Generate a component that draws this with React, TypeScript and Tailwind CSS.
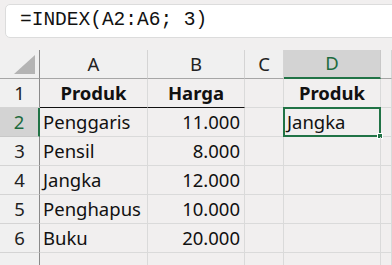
const cols = ['A', 'B', 'C', 'D', '']

const rows: Array<[string, string, string, string]> = [
  ['Produk', 'Harga', '', 'Produk'],
  ['Penggaris', '11.000', '', 'Jangka'],
  ['Pensil', '8.000', '', ''],
  ['Jangka', '12.000', '', ''],
  ['Penghapus', '10.000', '', ''],
  ['Buku', '20.000', '', ''],
  ['', '', '', ''],
]

export default function App() {
  return (
    <div className="w-[392px] h-[265px] overflow-hidden bg-[#f1efef]">
      {/* formula bar */}
      <div className="h-[50px] pt-[4px] pl-[5px]">
        <div className="h-[34px] -mr-4 flex items-center pl-[14px] rounded-[5px] border border-[#dcdcdc] bg-white">
          <span className="font-['Liberation_Mono',monospace] text-[19.5px] text-[#111] leading-none">
            =INDEX(A2:A6; 3)
          </span>
        </div>
      </div>

      <div className="grid grid-cols-[40px_108px_97px_39px_97px_1fr] font-['Noto_Sans',sans-serif] text-[18.5px] leading-none text-[#111]">
        {/* corner */}
        <div className="h-[29px] border-r border-b border-r-[#8a8a8a] border-b-[#a6a6a6] bg-[#f0f0f0] flex items-end justify-end pr-[4px] pb-[4px]">
          <svg width="21" height="19" viewBox="0 0 21 19">
            <polygon points="21,0 21,19 0,19" fill="#b4b4b4" />
          </svg>
        </div>
        {cols.map((c) => (
          <div
            key={c || 'E'}
            className={
              c === 'D'
                ? 'h-[29px] flex items-center justify-center border-r border-r-[#c8c8c8] border-b-2 border-b-[#217346] bg-[#d3d3d3] text-[#1d6b3e]'
                : 'h-[29px] flex items-center justify-center border-r border-r-[#d4d4d4] border-b border-b-[#a6a6a6] bg-[#f0f0f0] text-[#222]'
            }
          >
            {c}
          </div>
        ))}

        {rows.map((r, i) => (
          <Row key={i} n={i + 1} cells={r} active={i === 1} />
        ))}
      </div>
    </div>
  )
}

function Row({ n, cells, active }: { n: number; cells: [string, string, string, string]; active: boolean }) {
  const head = n === 1
  const line = 'border-r border-b border-[#dadada]'
  return (
    <>
      <div
        className={
          active
            ? 'h-[29px] flex items-center justify-center bg-[#d3d3d3] text-[#1d6b3e] border-b border-b-[#c8c8c8] border-r-2 border-r-[#217346]'
            : 'h-[29px] flex items-center justify-center bg-[#f0f0f0] text-[#222] border-b border-b-[#d4d4d4] border-r border-r-[#8a8a8a]'
        }
      >
        {n < 7 ? n : ''}
      </div>
      <div className={`h-[29px] flex items-center ${line} ${head ? 'justify-center font-bold border-b-[#111]' : 'pl-[3px]'}`}>
        {cells[0]}
      </div>
      <div className={`h-[29px] flex items-center ${line} ${head ? 'justify-center font-bold border-b-[#111]' : 'justify-end pr-[4px]'}`}>
        {cells[1]}
      </div>
      <div className={`h-[29px] ${line}`}>{cells[2]}</div>
      <div className={`relative h-[29px] flex items-center ${line} ${head ? 'justify-center font-bold' : 'pl-[3px]'}`}>
        {cells[3]}
        {active && (
          <div className="absolute -left-px -top-px -right-px -bottom-px border-2 border-[#217346]">
            <div className="absolute -right-[4px] -bottom-[4px] w-[6px] h-[6px] bg-[#217346] border border-white" />
          </div>
        )}
      </div>
      <div className={`h-[29px] ${line}`} />
    </>
  )
}
